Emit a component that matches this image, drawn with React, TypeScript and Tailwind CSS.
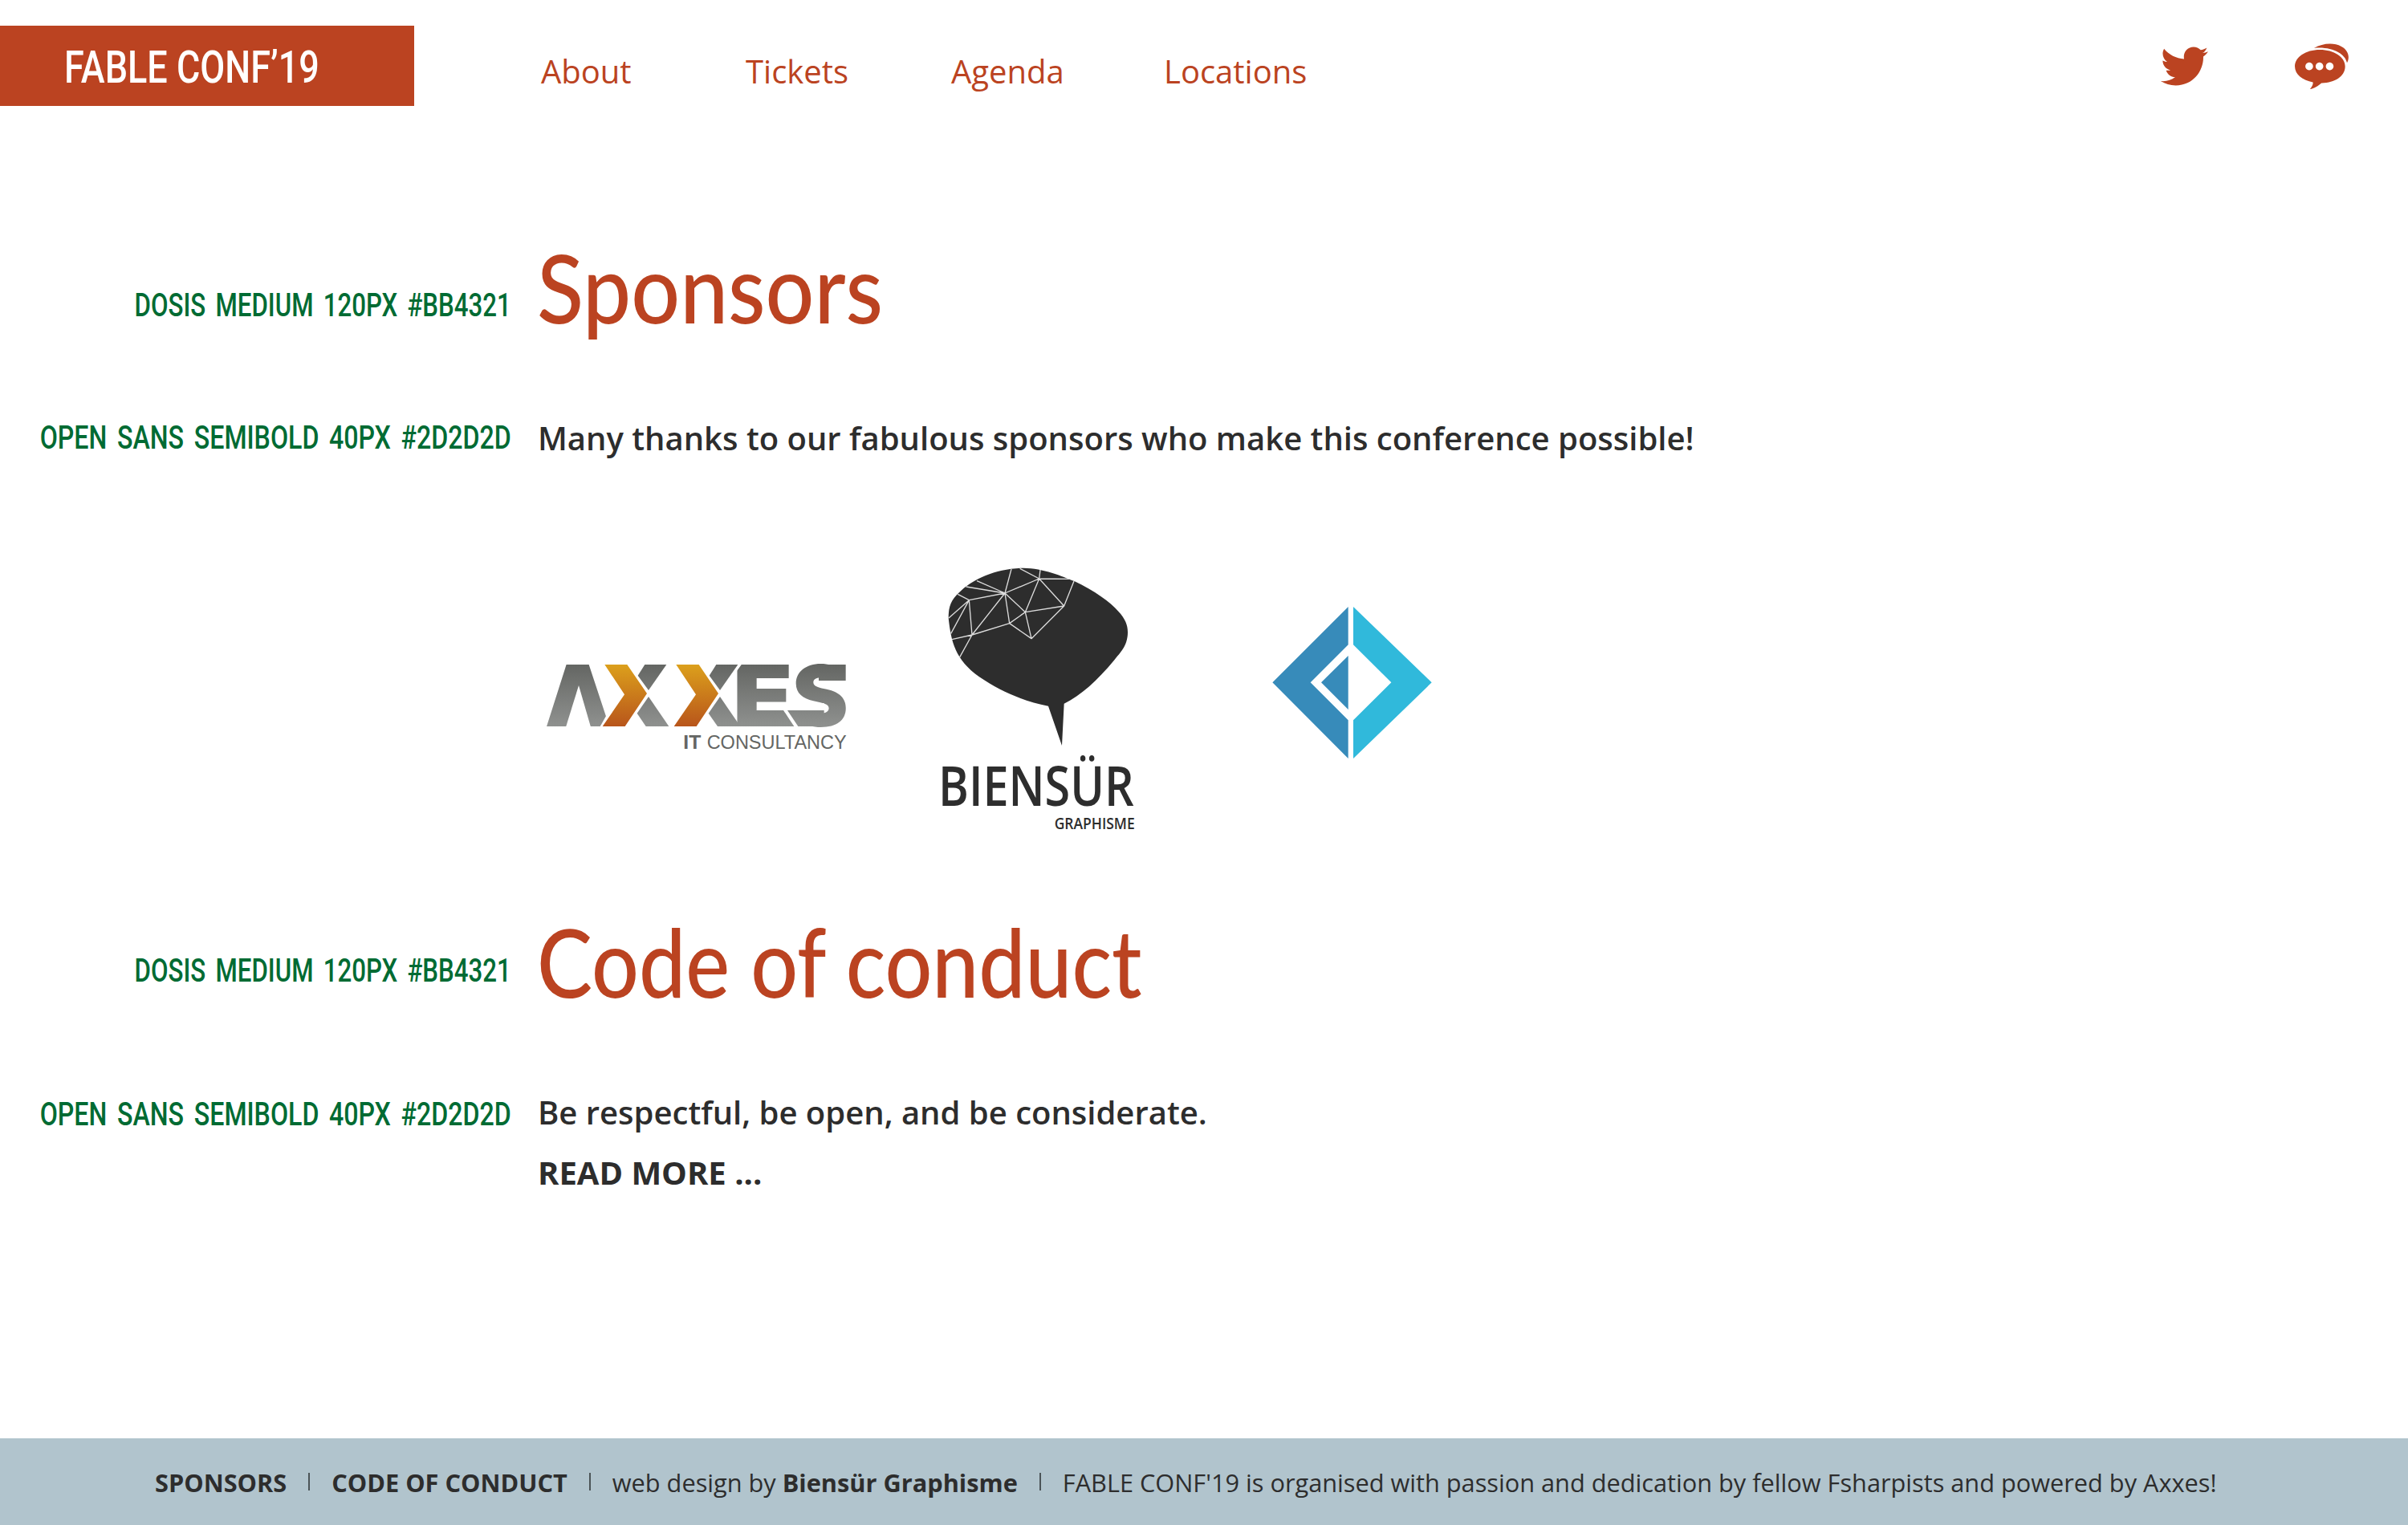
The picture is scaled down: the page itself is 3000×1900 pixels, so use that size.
import type { ReactNode } from "react";
import { FaTwitter } from "react-icons/fa";

const NAV = ["About", "Tickets", "Agenda", "Locations"];

function ChatIcon() {
  return (
    <svg viewBox="657 71 202 172" className="h-[57px] w-[67px]" fill="currentColor">
      <path d="M729 89C760 72 800 66 832 83C862 99 863 127 853 144C846 110 795 82 729 89Z" />
      <path
        fillRule="evenodd"
        d="M751 95C804 95 846 122 846 158C846 196 804 221 757 220C745 230 730 241 714 243C723 233 726 225 725 217C686 210 657 188 657 158C657 122 698 95 751 95ZM711 143a14.500 14.500 0 1 0 .01 0ZM749.500 143a14.500 14.500 0 1 0 .01 0ZM788 143a14.500 14.500 0 1 0 .01 0Z"
      />
    </svg>
  );
}

function AxxesLogo() {
  return (
    <svg viewBox="0 0 1260 510" className="mt-[100px] h-[170px] w-[420px] shrink-0">
      <defs>
        <linearGradient id="steel" gradientUnits="userSpaceOnUse" x1="0" y1="114" x2="0" y2="345">
          <stop offset="0" stopColor="#646663" />
          <stop offset="1" stopColor="#8f918f" />
        </linearGradient>
        <linearGradient id="amber" gradientUnits="userSpaceOnUse" x1="0" y1="114" x2="0" y2="345">
          <stop offset="0" stopColor="#dca01c" />
          <stop offset="1" stopColor="#b8551b" />
        </linearGradient>
      </defs>
      <g className="font-['Inter',sans-serif] text-[318px] font-black" fill="url(#steel)">
        <text x="56" y="345" textLength="248" lengthAdjust="spacingAndGlyphs">A</text>
        <text x="758" y="345" textLength="225" lengthAdjust="spacingAndGlyphs">E</text>
        <text x="980" y="345" textLength="210" lengthAdjust="spacingAndGlyphs">S</text>
      </g>
      <polygon fill="url(#steel)" points="165,150 201,150 240,345 123,345" />
      <g fill="#fff">
        <polygon points="135,347 183,192 228,347" />
        <polygon points="287,303 261,349 320,349 310,303" />
        <polygon points="770,110 794,110 776,135 770,140" />
        <rect x="1072" y="174" width="114" height="16" />
        <rect x="980" y="258" width="120" height="27" />
        <polygon points="948,285 963,285 1007,350 988,350" />
      </g>
      <g fill="url(#steel)">
        <polygon points="430,114 511,114 444,210 404,155" />
        <polygon points="444,234 520,345 434,345 401,296" />
        <polygon points="697,114 778,114 711,210 671,155" />
        <polygon points="711,234 787,345 702,345 668,296" />
        <polygon points="846,285 948,285 988,345 846,345" />
        <polygon points="963,285 1100,285 1100,345 1003,345" />
        <polygon points="1080,114 1181,114 1181,174 1080,174" />
      </g>
      <g fill="url(#amber)">
        <polygon points="280,114 364,114 438,222 356,345 272,345 354,226" />
        <polygon points="547,114 632,114 705,222 623,345 539,345 621,226" />
      </g>
      <g className="font-['Liberation_Sans',sans-serif] text-[71px]" fill="#646663">
        <text x="574" y="429" className="font-bold" textLength="66" lengthAdjust="spacingAndGlyphs">IT</text>
        <text x="662" y="429" textLength="522" lengthAdjust="spacingAndGlyphs">CONSULTANCY</text>
      </g>
    </svg>
  );
}

function BiensurLogo() {
  return (
    <svg viewBox="0 0 870 1080" className="ml-[70px] h-[360px] w-[290px] shrink-0" fill="#2d2d2d">
      <path d="M95 240C95 190 108 168 145 135C190 95 270 55 375 53C450 54 520 84 565 102C640 138 700 180 730 215C755 243 765 265 765 293C765 345 735 370 715 397C650 475 590 530 527 560L519 717L468 569C380 552 290 515 210 460C120 395 105 330 95 240Z" />
      <path
        fill="none"
        stroke="#dcdcdc"
        strokeWidth="4"
        strokeLinejoin="round"
        d="M330 57L306 147L201 101M306 147L161 123M306 147L172 173L130 151M172 173L96 240M172 173L104 298M172 173L183 303L306 147L434 93L362 55M438 60L434 93L548 94M434 93L527 195L564 102M434 93L382 218L306 147L323 260L382 218L527 195L405 317L382 218M405 317L323 260L183 303L108 320M183 303L136 388"
      />
      <g className="font-['Open_Sans',sans-serif]">
        <text x="57" y="942" className="text-[206px] font-[560]" textLength="731" lengthAdjust="spacingAndGlyphs">BIENSÜR</text>
        <text x="491" y="1029" className="text-[60px] font-[560]" textLength="300" lengthAdjust="spacingAndGlyphs">GRAPHISME</text>
      </g>
    </svg>
  );
}

function FSharpLogo() {
  return (
    <svg viewBox="0 0 750 720" className="mt-[40px] ml-[120px] h-[240px] w-[250px] shrink-0">
      <g fill="#378bba">
        <polygon points="359,78 76,361 359,645 359,502 218,361 359,220" />
        <polygon points="359,261 258,361 359,462" />
      </g>
      <polygon fill="#30b9db" points="378,78 671,361 378,645 378,502 520,361 378,220" />
    </svg>
  );
}

function Note({ className, children }: { className: string; children: ReactNode }) {
  return (
    <div className="flex w-[637px] shrink-0 justify-end">
      <span
        className={`inline-block origin-right font-['Roboto',sans-serif] text-[41px] leading-[60px] font-medium whitespace-nowrap text-[#006b33] [word-spacing:6px] ${className}`}
      >
        {children}
      </span>
    </div>
  );
}

function Section({ title, titleClass, titleNote, bodyNote, children }: { title: string; titleClass: string; titleNote: string; bodyNote: string; children: ReactNode }) {
  return (
    <section className="flex flex-col gap-20">
      <div className="flex gap-8">
        <Note className={`${titleNote} scale-x-[0.762]`}>DOSIS MEDIUM 120PX #BB4321</Note>
        <h2 className={`origin-left font-['Lato',sans-serif] text-[118px] leading-[140px] font-medium whitespace-nowrap text-[#bb4321] ${titleClass}`}>{title}</h2>
      </div>
      <div className="flex gap-[33px]">
        <Note className={`${bodyNote} scale-x-[0.784]`}>OPEN SANS SEMIBOLD 40PX #2D2D2D</Note>
        <div className="text-[40px] leading-[75px] font-semibold">{children}</div>
      </div>
    </section>
  );
}

function Bar() {
  return <span className="mb-[3px] h-[22px] w-[2px] bg-[#4b5457]" />;
}

export default function App() {
  return (
    <div className="flex h-[1900px] w-[3000px] flex-col overflow-hidden bg-white font-['Open_Sans',sans-serif] text-[#2d2d2d]">
      <header className="flex h-[288px] shrink-0 items-start pt-8 text-[#bb4321]">
        <div className="flex h-[100px] w-[516px] items-center bg-[#bb4321] pt-1 pl-[80px]">
          <h1 className="origin-left scale-x-[0.803] font-['Roboto',sans-serif] text-[56px] leading-[100px] font-medium whitespace-nowrap text-white">FABLE CONF’19</h1>
        </div>
        <nav className="mt-[27px] ml-[158px] grid grid-cols-[255px_256px_265px_auto] text-[40px] leading-[60px]">
          {NAV.map((item) => (
            <a key={item}>{item}</a>
          ))}
        </nav>
        <div className="mt-[21px] mr-[74px] ml-auto flex items-center gap-[108px]">
          <FaTwitter className="size-[59px]" />
          <ChatIcon />
        </div>
      </header>

      <main className="flex grow flex-col">
        <Section title="Sponsors" titleClass="scale-x-[0.907]" titleNote="mt-[62px]" bodyNote="mt-[7px]">
          <p>Many thanks to our fabulous sponsors who make this conference possible!</p>
        </Section>
        <div className="flex h-[545px] items-start pt-[107px] pl-[660px]">
          <AxxesLogo />
          <BiensurLogo />
          <FSharpLogo />
        </div>
        <Section title="Code of conduct" titleClass="scale-x-[0.878]" titleNote="mt-[51px]" bodyNote="mt-[10px]">
          <p>Be respectful, be open, and be considerate.</p>
          <p className="font-bold">READ MORE ...</p>
        </Section>
      </main>

      <footer className="flex h-[108px] shrink-0 items-center gap-[27px] bg-[#b1c4cd] pt-[2px] pl-[193px] text-[30.72px] leading-[48px] whitespace-nowrap">
        <b>SPONSORS</b>
        <Bar />
        <b>CODE OF CONDUCT</b>
        <Bar />
        <span>
          web design by <b>Biensür Graphisme</b>
        </span>
        <Bar />
        <span>FABLE CONF'19 is organised with passion and dedication by fellow Fsharpists and powered by Axxes!</span>
      </footer>
    </div>
  );
}
